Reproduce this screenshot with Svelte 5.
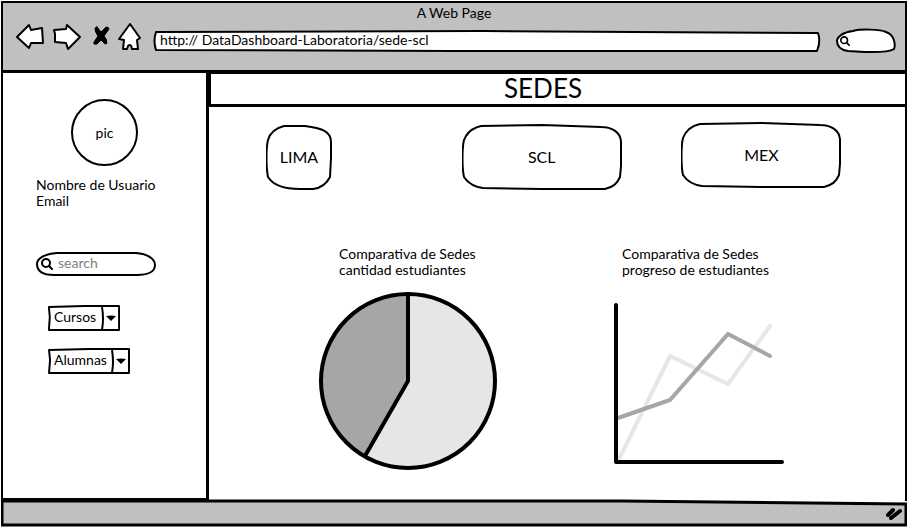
<script>
  const frames = {
    address: { box: '0 0 668 24', d: 'M3 3 L330 2 L480 3 L664 4 Q667 12 663 22 L300 22 L3 21 Q0 12 3 3Z' },
    pill: { box: '0 0 60 26', d: 'M17 3 C24 1 44 1 50 4 C60 7 59 19 58 21 C52 25 32 24 29 24 L12 23 C5 22 1 19 1 13 C1 9 7 4 17 3Z' },
    search: { box: '0 0 120 26', d: 'M21 2 L100 2 C112 3 119 8 119 14 C119 21 111 24 101 24 L18 24 C7 24 1 20 1 13 C1 7 9 3 21 2Z' },
    square: { box: '0 0 66 66', d: 'M18 2 L39 2 C55 4 65 7 65 18 L65 34 L64 53 C61 59 56 64 47 65 L34 65 C19 65 7 61 2 53 C0 43 0 23 2 16 C4 9 10 4 18 2Z' },
    wide: { box: '0 0 160 66', d: 'M19 2 L80 1 L139 3 C150 3 158 8 159 17 L159 42 L158 53 C155 60 151 63 143 65 L80 65 L21 64 C13 63 6 59 2 53 C0 44 0 24 2 16 C5 8 10 4 19 2Z' },
    combo: { box: '0 0 80 26', d: 'M1 2 L40 1 L79 1 L79 25 L40 25 L1 25 L2 12Z' }
  };

  const icons = [
    { label: 'Atrás', x: 16, w: 28, d: 'M17 37 L29 25 L31 30 L42 28 L43 43 L31 43 L29 48Z' },
    { label: 'Adelante', x: 52, w: 32, d: 'M54 30 L66 29 L67 25 L80 37 L68 49 L66 43 L55 42 L55 34Z' },
    { label: 'Detener', x: 92, w: 18, d: 'M97 27 L101 32 L106 27 Q109 27 109 29 L104 36 Q107 39 107 43 Q106 45 104 43 L101 40 L97 44 Q93 45 94 42 L98 36 Q95 32 95 29 Q95 27 97 27Z', solid: true },
    { label: 'Inicio', x: 118, w: 24, d: 'M130 24 L140 38 L137 40 L138 49 L132 49 Q131 43 128 46 L127 49 L123 49 L124 40 L119 39Z' }
  ];

  const filters = ['Cursos', 'Alumnas'];
  const sites = [
    { name: 'LIMA', frame: 'square' },
    { name: 'SCL', frame: 'wide' },
    { name: 'MEX', frame: 'wide' }
  ];

  let url = $state('http:// DataDashboard-Laboratoria/sede-scl');
  let selected = $state('SCL');
</script>

{#snippet outline(name)}
  <svg class="outline" viewBox={frames[name].box} preserveAspectRatio="none" aria-hidden="true">
    <path d={frames[name].d} />
  </svg>
{/snippet}

{#snippet lens()}
  <svg class="lens" viewBox="0 0 12 12" aria-hidden="true">
    <circle cx="5" cy="5" r="4" /><path d="M8 8 L11 11" />
  </svg>
{/snippet}

<div class="page">
  <header>
    <div class="title">A Web Page</div>
    <div class="toolbar">
      <nav>
        {#each icons as icon}
          <button aria-label={icon.label}>
            <svg width={icon.w} height="28" viewBox="{icon.x} 23 {icon.w} 28" class:solid={icon.solid}>
              <path d={icon.d} />
            </svg>
          </button>
        {/each}
      </nav>
      <div class="field address">
        {@render outline('address')}
        <input type="text" aria-label="Dirección" bind:value={url} />
      </div>
      <div class="field pill">
        {@render outline('pill')}
        {@render lens()}
        <input type="text" aria-label="Buscar en la web" />
      </div>
    </div>
  </header>

  <div class="body">
    <aside>
      <div class="avatar">pic</div>
      <p>Nombre de Usuario<br />Email</p>
      <div class="field search">
        {@render outline('search')}
        {@render lens()}
        <input type="text" aria-label="Buscar" placeholder="search" />
      </div>
      <div class="filters">
        {#each filters as filter}
          <div class="field combo">
            {@render outline('combo')}
            <select aria-label={filter}><option>{filter}</option></select>
            <svg class="arrow" viewBox="0 0 20 26" aria-hidden="true">
              <path class="rule" d="M2 2 Q4 14 2 25" />
              <path d="M6 11 Q11 10 16 11 L11 16Z" />
            </svg>
          </div>
        {/each}
      </div>
    </aside>

    <main>
      <h1>SEDES</h1>
      <div class="sites">
        {#each sites as site}
          <button class="field {site.frame}" aria-pressed={selected === site.name} onclick={() => (selected = site.name)}>
            {@render outline(site.frame)}
            <span>{site.name}</span>
          </button>
        {/each}
      </div>
      <div class="charts">
        <figure>
          <figcaption class="inset">Comparativa de Sedes<br />cantidad estudiantes</figcaption>
          <svg width="178" height="178" viewBox="0 0 178 178" role="img" aria-label="Cantidad de estudiantes">
            <circle cx="89" cy="89" r="87" fill="#e6e6e6" />
            <path d="M89 89 L46 164 A87 87 0 0 1 89 2Z" fill="#a6a6a6" />
            <g fill="none" stroke="#000" stroke-width="4">
              <circle cx="89" cy="89" r="87" />
              <path d="M89 2 V89 L46 164" />
            </g>
          </svg>
        </figure>
        <figure>
          <figcaption>Comparativa de Sedes<br />progreso de estudiantes</figcaption>
          <svg width="172" height="178" viewBox="614 292 172 178" role="img" aria-label="Progreso de estudiantes">
            <g fill="none" stroke-width="4" stroke-linecap="round">
              <path d="M619 461 L671 356 L729 384 L771 326" stroke="#e6e6e6" />
              <path d="M619 418 L671 400 L729 334 L771 356" stroke="#a6a6a6" />
              <path d="M617 305 V462 H783" stroke="#000" stroke-linejoin="round" />
            </g>
          </svg>
        </figure>
      </div>
    </main>
  </div>

  <footer>
    <svg class="bar" viewBox="0 0 904 28" preserveAspectRatio="none" aria-hidden="true">
      <path d="M1 2 L620 2 L903 5 L903 26 L300 26 L1 26Z" />
    </svg>
    <svg class="grip" viewBox="0 0 18 14" aria-hidden="true">
      <path d="M3 8 L8 3 M6 11 L15 4" />
    </svg>
  </footer>
</div>

<style>
  :global(body) {
    margin: 0;
    background: #fff;
  }

  .page {
    box-sizing: border-box;
    min-height: 100vh;
    display: flex;
    flex-direction: column;
    padding: 1px;
    font: 14px/16px Lato, "Open Sans", sans-serif;
    color: #000;
  }

  button,
  input,
  select {
    margin: 0;
    padding: 0;
    border: 0;
    background: none;
    font: inherit;
    color: inherit;
  }

  header {
    border: 2px solid #000;
    border-bottom-width: 3px;
    background: #c0c0c0;
    padding-bottom: 17px;
  }

  .title {
    text-align: center;
    line-height: 20px;
  }

  .toolbar {
    display: flex;
    align-items: center;
    padding: 0 9px 0 13px;
    height: 30px;
  }

  nav {
    display: flex;
    gap: 8px;
    margin: 0 11px 2px 0;
  }

  nav button,
  nav svg {
    display: block;
  }

  nav path {
    fill: #fff;
    stroke: #000;
    stroke-width: 2;
    stroke-linejoin: round;
    stroke-linecap: round;
  }

  nav .solid path {
    fill: #000;
    stroke-width: 1;
  }

  .field {
    display: grid;
    align-items: center;
  }

  .field > * {
    grid-area: 1 / 1;
    min-width: 0;
  }

  .outline {
    width: 100%;
    height: 100%;
  }

  .outline path {
    fill: #fff;
    stroke: #000;
    stroke-width: 2;
    stroke-linejoin: round;
    vector-effect: non-scaling-stroke;
  }

  .field input {
    width: 100%;
    box-sizing: border-box;
    outline: none;
  }

  .address {
    flex: 1;
    height: 24px;
    margin: 6px 14px 0 0;
  }

  .address input {
    padding: 0 7px 2px;
  }

  .pill {
    width: 60px;
    height: 26px;
    margin-top: 6px;
  }

  .lens {
    width: 12px;
    height: 12px;
    margin-left: 5px;
    fill: none;
    stroke: #000;
    stroke-width: 2;
    stroke-linecap: round;
  }

  .pill .lens {
    width: 10px;
    height: 10px;
    margin-left: 4px;
  }

  .pill input {
    padding: 0 8px 0 20px;
  }

  .body {
    flex: 1;
    display: flex;
    border-right: 2px solid #000;
  }

  aside {
    box-sizing: border-box;
    width: 208px;
    border: 2px solid #000;
    border-width: 0 3px 3px 2px;
    padding: 26px 12px 0 33px;
  }

  .avatar {
    box-sizing: border-box;
    width: 67px;
    height: 67px;
    margin-left: 35px;
    border: 2px solid #000;
    border-radius: 50%;
    line-height: 63px;
    text-align: center;
  }

  p {
    margin: 11px 0 42px;
  }

  .search {
    width: 120px;
    height: 26px;
  }

  .search input {
    padding: 0 12px 2px 22px;
  }

  .search input::placeholder {
    color: #808088;
    opacity: 1;
  }

  .filters {
    display: flex;
    flex-direction: column;
    align-items: flex-start;
    gap: 17px;
    margin: 28px 0 0 12px;
  }

  .combo {
    height: 26px;
  }

  .combo .outline {
    width: 0;
    min-width: 100%;
  }

  .combo select {
    appearance: none;
    height: 26px;
    padding: 0 23px 2px 6px;
    outline: none;
  }

  .arrow {
    width: 20px;
    height: 26px;
    justify-self: end;
    pointer-events: none;
  }

  .rule {
    fill: none;
    stroke: #000;
    stroke-width: 2;
  }

  main {
    flex: 1;
    min-width: 0;
  }

  h1 {
    margin: 0;
    border: 2px solid #000;
    border-width: 1px 0 3px 2px;
    padding: 0 30px 2px 0;
    font-size: 26px;
    font-weight: 400;
    line-height: 28px;
    text-align: center;
  }

  .sites {
    display: grid;
    grid-template-columns: 195fr 219fr 160fr;
    align-items: end;
    height: 68px;
    padding: 15px 63px 0 57px;
    font-size: 16px;
  }

  .sites button {
    height: 66px;
    text-align: center;
  }

  .sites button:last-child {
    align-self: start;
  }

  .square {
    width: 66px;
  }

  .wide {
    width: 160px;
  }

  .charts {
    display: grid;
    grid-template-columns: 294fr 292fr;
    padding: 56px 0 0 110px;
  }

  figure {
    margin: 0;
  }

  figure svg {
    display: block;
  }

  figcaption {
    padding: 0 0 14px 9px;
  }

  .inset {
    padding-left: 20px;
  }

  footer {
    display: grid;
    align-items: center;
    height: 28px;
    margin-top: -2px;
  }

  footer svg {
    grid-area: 1 / 1;
  }

  .bar {
    width: 100%;
    height: 28px;
  }

  .bar path {
    fill: #c0c0c0;
    stroke: #000;
    stroke-width: 3;
    vector-effect: non-scaling-stroke;
  }

  .grip {
    width: 18px;
    height: 14px;
    justify-self: end;
    margin: 2px 4px 0 0;
    fill: none;
    stroke: #000;
    stroke-width: 4;
    stroke-linecap: round;
  }
</style>
